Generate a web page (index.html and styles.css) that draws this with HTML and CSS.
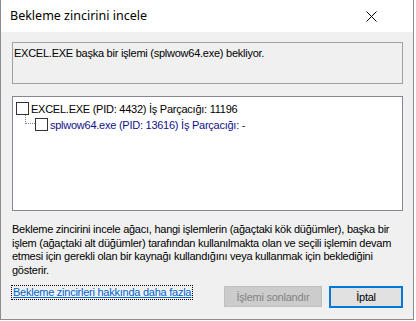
FILE: index.html
```html
<!DOCTYPE html>
<html lang="tr">
<head>
    <meta charset="UTF-8">
    <title>Bekleme zincirini incele</title>
    <link rel="stylesheet" href="styles.css">
</head>
<body>
    <div class="window">
        <div class="titlebar">
            <span class="title">Bekleme zincirini incele</span>
            <svg class="close" width="11" height="11" viewBox="0 0 11 11">
                <path d="M0.5 0.5 L10.5 10.5 M10.5 0.5 L0.5 10.5" stroke="#000" stroke-width="1" fill="none"/>
            </svg>
        </div>
        <div class="content">
            <div class="msgbox">EXCEL.EXE başka bir işlemi (splwow64.exe) bekliyor.</div>
            <div class="tree">
                <div class="node">
                    <span class="check"></span>
                    <span class="label">EXCEL.EXE (PID: 4432) İş Parçacığı: 11196</span>
                </div>
                <div class="node child">
                    <span class="branch"></span>
                    <span class="check"></span>
                    <span class="label">splwow64.exe (PID: 13616) İş Parçacığı: -</span>
                </div>
            </div>
            <p class="desc">Bekleme zincirini incele ağacı, hangi işlemlerin (ağaçtaki kök düğümler), başka bir<br>işlem (ağaçtaki alt düğümler) tarafından kullanılmakta olan ve seçili işlemin devam<br>etmesi için gerekli olan bir kaynağı kullandığını veya kullanmak için beklediğini<br>gösterir.</p>
            <div class="footer">
                <a class="link" href="#">Bekleme zincirleri hakkında daha fazla</a>
                <div class="buttons">
                    <button class="btn disabled" disabled>İşlemi sonlandır</button>
                    <button class="btn primary">İptal</button>
                </div>
            </div>
        </div>
    </div>
</body>
</html>
```
FILE: styles.css
```css
* {
    margin: 0;
    padding: 0;
    box-sizing: border-box;
}

body {
    background-color: #fff;
    font-family: "Liberation Sans", Arial, sans-serif;
    font-size: 11px;
    letter-spacing: -0.25px;
    color: #000;
}

.window {
    width: 414px;
    height: 320px;
    background-color: #f0f0f0;
    border-left: 1px solid #8c8c8c;
    border-right: 1px solid #8c8c8c;
    border-bottom: 1px solid #8c8c8c;
}

.titlebar {
    height: 32px;
    background-color: #fff;
    display: flex;
    align-items: center;
    justify-content: space-between;
    padding: 0 36px 0 9px;
}

.title {
    font-family: "Noto Sans", "Open Sans", sans-serif;
    font-size: 12.5px;
    letter-spacing: 0;
    padding-bottom: 1px;
}

.close {
    margin-top: 1px;
}

.content {
    padding: 10px 10px 0 11px;
}

.msgbox {
    height: 42px;
    border: 1px solid #a0a0a0;
    padding: 4px 1px;
    line-height: 13px;
}

.tree {
    margin-top: 12px;
    height: 115px;
    background-color: #fff;
    border: 1px solid #828790;
    padding: 4px 3px;
}

.node {
    display: flex;
    align-items: center;
    height: 15px;
    margin-bottom: 1px;
}

.check {
    width: 13px;
    height: 13px;
    border: 1px solid #333;
    background-color: #fff;
    margin-right: 2px;
}

.child {
    padding-left: 9px;
}

.branch {
    width: 10px;
    height: 9px;
    align-self: flex-start;
    margin-top: -2px;
    border-left: 1px dotted #7f7f7f;
    border-bottom: 1px dotted #7f7f7f;
}

.child .label {
    color: #10108a;
}

.desc {
    margin-top: 12px;
    line-height: 13.5px;
    white-space: nowrap;
}

.footer {
    margin-top: 9px;
    display: flex;
    justify-content: space-between;
    align-items: flex-start;
}

.link {
    margin-top: 0;
    color: #0066cc;
    text-decoration: underline;
    outline: 1px dotted #000;
    outline-offset: 0;
    padding: 0 1px;
    line-height: 13px;
}

.buttons {
    display: flex;
    gap: 7px;
}

.btn {
    font-family: "Liberation Sans", Arial, sans-serif;
    font-size: 11px;
    letter-spacing: -0.25px;
    height: 22px;
    background-color: #e1e1e1;
    border: 1px solid #adadad;
}

.disabled {
    width: 98px;
    height: 21px;
    background-color: #cccccc;
    border-color: #bfbfbf;
    color: #838383;
}

.primary {
    width: 74px;
    border: 2px solid #0078d7;
}
```
